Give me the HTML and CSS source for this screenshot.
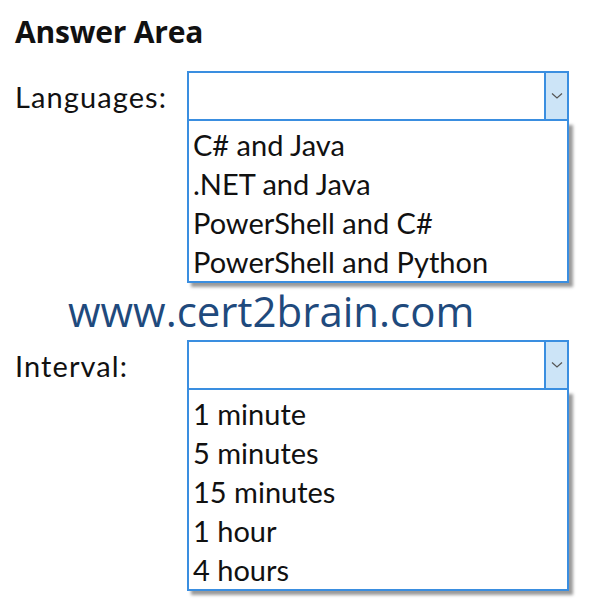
FILE: index.html
```html
<html>
    <head>
    <title>Answer Area</title>
        <link rel="stylesheet" href="styles.css">
    </head>
    <body>
       <div class="page">
           <h1 class="title">Answer Area</h1>

           <div class="row">
               <div class="label">Languages:</div>
               <div class="combo">
                   <div class="select">
                       <span class="value"></span>
                       <span class="arrow">
                           <svg width="12" height="8" viewBox="0 0 12 8"><path d="M1 1.5 L6 6 L11 1.5" fill="none" stroke="#555" stroke-width="1.2"/></svg>
                       </span>
                   </div>
                   <ul class="list">
                       <li>C# and Java</li>
                       <li>.NET and Java</li>
                       <li>PowerShell and C#</li>
                       <li>PowerShell and Python</li>
                   </ul>
               </div>
           </div>

           <div class="watermark">www.cert2brain.com</div>

           <div class="row">
               <div class="label">Interval:</div>
               <div class="combo">
                   <div class="select">
                       <span class="value"></span>
                       <span class="arrow">
                           <svg width="12" height="8" viewBox="0 0 12 8"><path d="M1 1.5 L6 6 L11 1.5" fill="none" stroke="#555" stroke-width="1.2"/></svg>
                       </span>
                   </div>
                   <ul class="list">
                       <li>1 minute</li>
                       <li>5 minutes</li>
                       <li>15 minutes</li>
                       <li>1 hour</li>
                       <li>4 hours</li>
                   </ul>
               </div>
           </div>
       </div>
    </body>
</html>
```

FILE: styles.css
```css
body {
    margin: 0;
    background: #fff;
    color: #111;
    font-family: Lato, 'Open Sans', sans-serif;
}

.page {
    padding: 14px 0 0 15px;
}

.title {
    margin: 0 0 21px 0;
    font-family: 'Open Sans', sans-serif;
    font-size: 30px;
    font-weight: bold;
    line-height: 36px;
    letter-spacing: -0.2px;
}

.row {
    display: flex;
    align-items: flex-start;
}

.label {
    width: 172px;
    height: 50px;
    display: flex;
    align-items: center;
    font-size: 29px;
    letter-spacing: 1.1px;
}

.combo {
    width: 382px;
}

.select {
    height: 46px;
    border: 2px solid #3a8ee0;
    display: flex;
    background: #fff;
}

.value {
    flex: 1;
}

.arrow {
    width: 21px;
    background: #cce4f7;
    border-left: 2px solid #3a8ee0;
    display: flex;
    align-items: center;
    justify-content: center;
}

.list {
    margin: 0;
    padding: 4px 0 0 4px;
    list-style: none;
    border: 2px solid #3a8ee0;
    border-top: none;
    box-shadow: 4px 4px 3px #9a9a9a;
    background: #fff;
}

.list li {
    height: 39px;
    line-height: 39px;
    font-size: 29px;
}

.watermark {
    margin: 5px 0 6px 53px;
    height: 46px;
    line-height: 46px;
    font-family: 'Open Sans', sans-serif;
    font-size: 42px;
    color: #1f4a7d;
}
```
